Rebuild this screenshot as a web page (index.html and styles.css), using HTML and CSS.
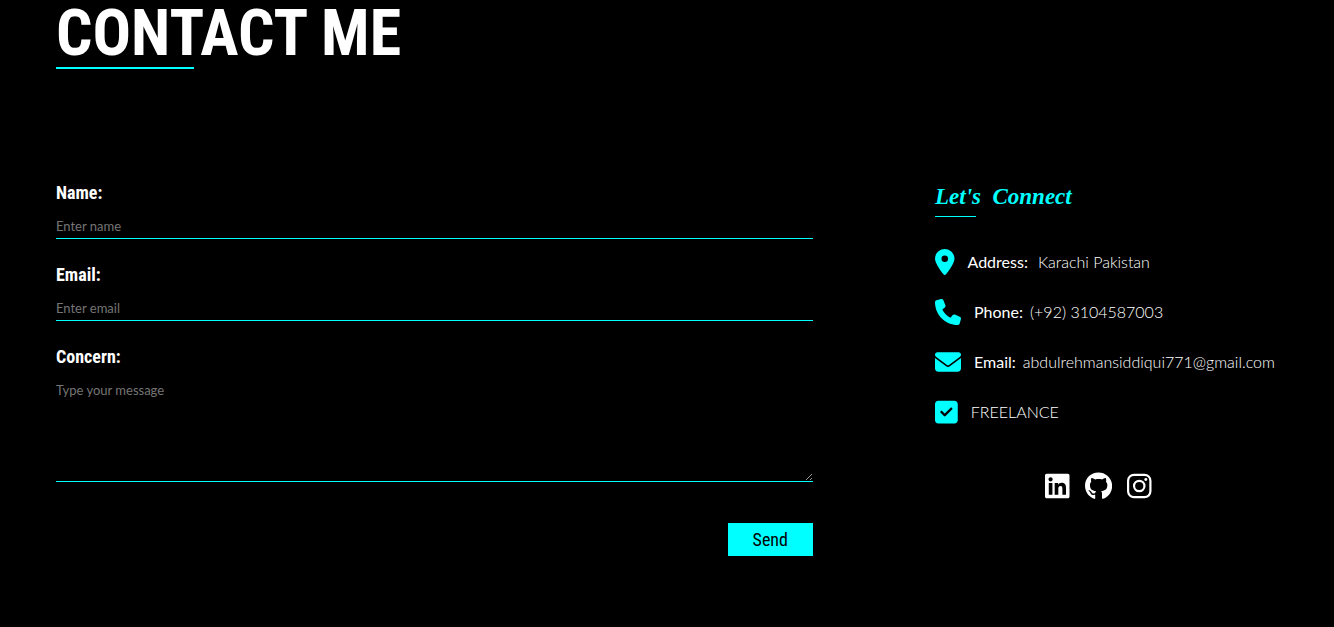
FILE: index.html
```html
<!DOCTYPE html>
<html lang="en">
<head>
<meta charset="utf-8">
<meta name="viewport" content="width=device-width, initial-scale=1">
<title>Contact Me</title>
<link rel="stylesheet" href="styles.css">
</head>
<body>
<main class="contact">
  <h1 class="title">CONTACT ME</h1>
  <div class="columns">
    <form class="form">
      <div class="field">
        <label class="label" for="name">Name:</label>
        <input class="input" id="name" type="text" placeholder="Enter name">
      </div>
      <div class="field">
        <label class="label" for="email">Email:</label>
        <input class="input" id="email" type="email" placeholder="Enter email">
      </div>
      <div class="field">
        <label class="label" for="concern">Concern:</label>
        <textarea class="input message" id="concern" placeholder="Type your message"></textarea>
      </div>
      <button class="send" type="submit">Send</button>
    </form>
    <section class="connect">
      <h2 class="subtitle">Let's &nbsp;Connect</h2>
      <ul class="details">
        <li class="detail">
          <svg class="icon" viewBox="0 0 384 512" aria-hidden="true"><path d="M215.7 499.2C267 435 384 279.4 384 192C384 86 298 0 192 0S0 86 0 192c0 87.4 117 243 168.3 307.2c12.3 15.3 35.1 15.3 47.4 0zM192 128a64 64 0 1 1 0 128 64 64 0 1 1 0-128z"/></svg>
          <p class="text"><span class="key key-wide">Address:</span>Karachi Pakistan</p>
        </li>
        <li class="detail">
          <svg class="icon" viewBox="0 0 512 512" aria-hidden="true"><path d="M164.9 24.6c-7.7-18.6-28-28.5-47.4-23.2l-88 24C12.1 30.2 0 46 0 64C0 311.4 200.6 512 448 512c18 0 33.8-12.1 38.6-29.5l24-88c5.3-19.4-4.6-39.7-23.2-47.4l-96-40c-16.3-6.8-35.2-2.1-46.3 11.6L304.7 368C234.3 334.7 177.3 277.7 144 207.3L193.3 167c13.7-11.2 18.4-30 11.6-46.3l-40-96z"/></svg>
          <p class="text"><span class="key">Phone:</span>(+92) 3104587003</p>
        </li>
        <li class="detail">
          <svg class="icon" viewBox="0 0 512 512" aria-hidden="true"><path d="M48 64C21.5 64 0 85.5 0 112c0 15.1 7.1 29.3 19.2 38.4L236.8 313.6c11.4 8.5 27 8.5 38.4 0L492.8 150.4c12.1-9.1 19.2-23.3 19.2-38.4c0-26.5-21.5-48-48-48H48zM0 176V384c0 35.3 28.7 64 64 64H448c35.3 0 64-28.7 64-64V176L294.4 339.2c-22.8 17.1-54 17.1-76.8 0L0 176z"/></svg>
          <p class="text"><span class="key">Email:</span>abdulrehmansiddiqui771@gmail.com</p>
        </li>
        <li class="detail">
          <svg class="icon" viewBox="0 0 448 512" aria-hidden="true"><path d="M64 32C28.7 32 0 60.7 0 96V416c0 35.3 28.7 64 64 64H384c35.3 0 64-28.7 64-64V96c0-35.3-28.7-64-64-64H64zM337 209L209 337c-9.4 9.4-24.6 9.4-33.9 0l-64-64c-9.4-9.4-9.4-24.6 0-33.9s24.6-9.4 33.9 0l47 47L303 175c9.4-9.4 24.6-9.4 33.9 0s9.4 24.6 0 33.9z"/></svg>
          <p class="text">FREELANCE</p>
        </li>
      </ul>
      <nav class="social" aria-label="Social profiles">
        <a class="social-link" href="#linkedin" aria-label="LinkedIn"><svg class="social-icon" viewBox="0 0 448 512"><path d="M416 32H31.9C14.3 32 0 46.5 0 64.3v383.4C0 465.5 14.3 480 31.9 480H416c17.6 0 32-14.5 32-32.3V64.3c0-17.8-14.4-32.3-32-32.3zM135.4 416H69V202.2h66.5V416zm-33.2-243c-21.3 0-38.5-17.3-38.5-38.5S80.9 96 102.2 96c21.2 0 38.5 17.3 38.5 38.5 0 21.3-17.2 38.5-38.5 38.5zm282.1 243h-66.4V312c0-24.8-.5-56.7-34.5-56.7-34.6 0-39.9 27-39.9 54.9V416h-66.4V202.2h63.7v29.2h.9c8.9-16.8 30.6-34.5 62.9-34.5 67.2 0 79.7 44.3 79.7 101.9V416z"/></svg></a>
        <a class="social-link" href="#github" aria-label="GitHub"><svg class="social-icon" viewBox="0 0 496 512"><path d="M165.9 397.4c0 2-2.3 3.6-5.2 3.6-3.3.3-5.6-1.3-5.6-3.6 0-2 2.3-3.6 5.2-3.6 3-.3 5.6 1.3 5.6 3.6zm-31.1-4.5c-.7 2 1.3 4.3 4.3 4.9 2.6 1 5.6 0 6.2-2s-1.3-4.3-4.3-5.2c-2.6-.7-5.5.3-6.2 2.3zm44.2-1.7c-2.9.7-4.9 2.6-4.6 4.9.3 2 2.9 3.3 5.9 2.6 2.9-.7 4.9-2.6 4.6-4.6-.3-1.9-3-3.2-5.9-2.9zM244.8 8C106.1 8 0 113.3 0 252c0 110.9 69.8 205.8 169.5 239.2 12.8 2.3 17.3-5.6 17.3-12.1 0-6.2-.3-40.4-.3-61.4 0 0-70 15-84.7-29.8 0 0-11.4-29.1-27.8-36.6 0 0-22.9-15.7 1.6-15.4 0 0 24.9 2 38.6 25.8 21.9 38.6 58.6 27.5 72.9 20.9 2.3-16 8.8-27.1 16-33.7-55.9-6.2-112.3-14.3-112.3-110.5 0-27.5 7.6-41.3 23.6-58.9-2.6-6.5-11.1-33.3 2.6-67.9 20.9-6.5 69 27 69 27 20-5.6 41.5-8.5 62.8-8.5s42.8 2.9 62.8 8.5c0 0 48.1-33.6 69-27 13.7 34.7 5.2 61.4 2.6 67.9 16 17.7 25.8 31.5 25.8 58.9 0 96.5-58.9 104.2-114.8 110.5 9.2 7.9 17 22.9 17 46.4 0 33.7-.3 75.4-.3 83.6 0 6.5 4.6 14.4 17.3 12.1C428.2 457.8 496 362.9 496 252 496 113.3 383.5 8 244.8 8z"/></svg></a>
        <a class="social-link" href="#instagram" aria-label="Instagram"><svg class="social-icon" viewBox="0 0 448 512"><g fill="none" stroke="currentColor" stroke-width="40"><rect x="20" y="52" width="408" height="408" rx="108"/><circle cx="224" cy="256" r="95"/></g><circle cx="344" cy="136" r="27"/></svg></a>
      </nav>
    </section>
  </div>
</main>
</body>
</html>
```
FILE: styles.css
```css
* {
  box-sizing: border-box;
}

body {
  margin: 0;
  background: #000;
  color: #fff;
  font: 300 16px/24px Lato, "Liberation Sans", sans-serif;
}

.contact {
  padding: 0 56px 64px;
}

.title {
  width: fit-content;
  margin: 0;
  font: 700 64px/67px "Roboto Condensed", "Liberation Sans Narrow", "Liberation Sans", sans-serif;
}

.title::after {
  content: "";
  display: block;
  width: 40%;
  height: 2px;
  background: #0ff;
}

.columns {
  display: grid;
  grid-template-columns: 757fr 343fr;
  gap: 122px;
  margin-top: 112px;
}

.form,
.field {
  display: flex;
  flex-direction: column;
}

.form {
  gap: 24px;
}

.label {
  font: 700 18px/24px "Roboto Condensed", "Liberation Sans Narrow", "Liberation Sans", sans-serif;
}

.input {
  width: 100%;
  padding: 13px 0 4px;
  border: 0;
  border-bottom: 1px solid #0ff;
  border-radius: 0;
  outline: 0;
  background: transparent;
  color: #fff;
  font: 400 13px/16px Lato, "Liberation Sans", sans-serif;
}

.input::placeholder {
  color: #757575;
}

.message {
  height: 113px;
  resize: vertical;
}

.send {
  align-self: flex-end;
  margin-top: 17px;
  padding: 5px 25px 4px;
  border: 0;
  background: #0ff;
  color: #000;
  font: 400 18px/24px "Roboto Condensed", "Liberation Sans Narrow", "Liberation Sans", sans-serif;
}

.subtitle {
  width: fit-content;
  margin: 0;
  color: #0ff;
  font: italic 700 23px/32px "Liberation Serif", cursive;
}

.subtitle::after {
  content: "";
  display: block;
  width: 30%;
  height: 1px;
  margin-top: 3px;
  background: #0ff;
}

.details {
  display: flex;
  flex-direction: column;
  gap: 24px;
  margin: 32px 0 0;
  padding: 0;
  list-style: none;
}

.detail {
  display: flex;
  align-items: center;
  gap: 13px;
}

.icon {
  height: 26px;
  fill: #0ff;
}

.text {
  margin: 0;
  white-space: nowrap;
}

.key {
  margin-right: 7px;
  font-weight: 400;
}

.key-wide {
  margin-right: 10px;
}

.social {
  display: flex;
  justify-content: center;
  gap: 15px;
  margin-top: 47px;
  padding-right: 16px;
}

.social-link {
  display: flex;
  color: #fff;
}

.social-icon {
  height: 28px;
  fill: currentColor;
}
```
